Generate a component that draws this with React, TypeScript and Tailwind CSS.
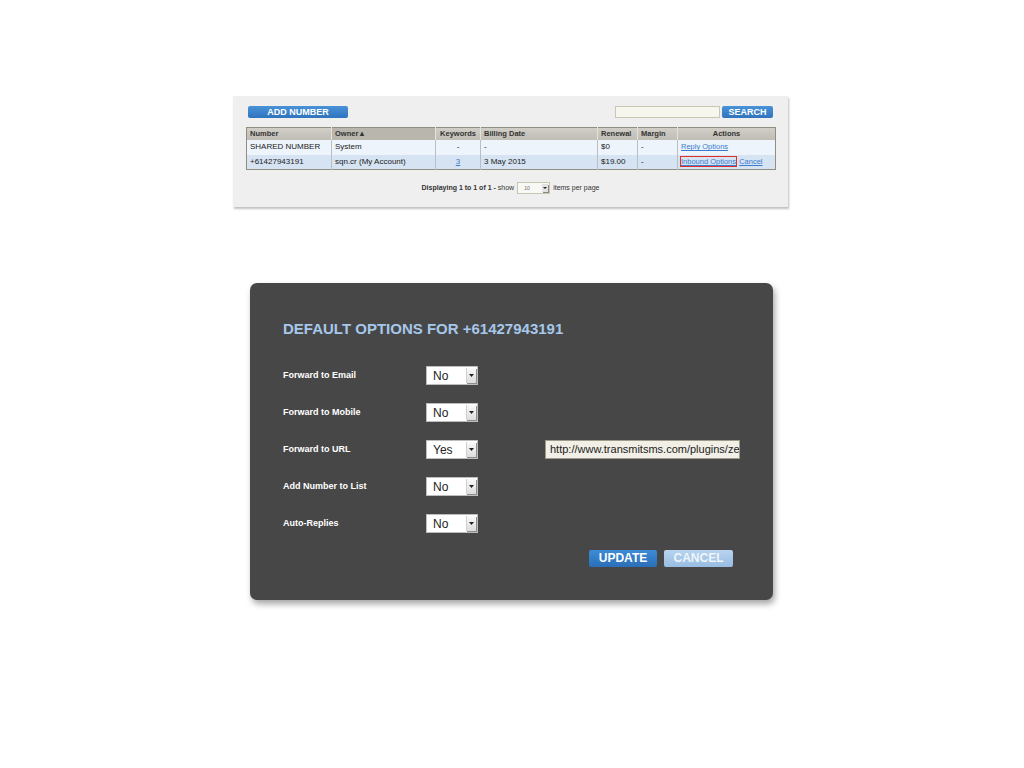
import React from "react"

const font = "font-['Liberation_Sans',Arial,sans-serif]"

function SmallSelect({ value }: { value: string }) {
  return (
    <div className="flex h-[19px] w-[52px] items-stretch border border-[#bdbdbd] bg-white">
      <span className="flex flex-1 items-center pl-[6px] text-[12px] text-[#222]">{value}</span>
      <span className="my-[1px] mr-[1px] flex w-[10px] items-center justify-center border-l border-[#cfcfcf] bg-gradient-to-b from-[#fafafa] to-[#dcdcdc] shadow-[1px_1px_0_#8d8d8d]">
        <svg width="5" height="3" viewBox="0 0 5 3">
          <path d="M0 0h5L2.5 3z" fill="#222" />
        </svg>
      </span>
    </div>
  )
}

const rows = [
  { label: "Forward to Email", value: "No" },
  { label: "Forward to Mobile", value: "No" },
  { label: "Forward to URL", value: "Yes", url: true },
  { label: "Add Number to List", value: "No" },
  { label: "Auto-Replies", value: "No" },
]

export default function App() {
  return (
    <div className={`min-h-[768px] w-[1024px] bg-white ${font}`}>
      <div className="pt-[96px]">
        {/* numbers panel */}
        <div className="ml-[233px] w-[555px] bg-[#efefef] px-[13px] pb-[13px] pt-[10px] shadow-[1px_2px_2px_rgba(0,0,0,0.25)]">
          <div className="flex items-center justify-between px-[2px]">
            <button className="h-[12px] w-[100px] rounded-[2px] bg-gradient-to-b from-[#4a93d8] to-[#2f74bd] text-[9px] font-bold leading-[12px] text-white">
              ADD NUMBER
            </button>
            <div className="flex items-center gap-[2px]">
              <div className="h-[12px] w-[105px] border border-[#c9c6b4] bg-[#f6f5ee]" />
              <button className="h-[12px] w-[51px] rounded-[2px] bg-gradient-to-b from-[#4a93d8] to-[#2f74bd] text-[9px] font-bold leading-[12px] text-white">
                SEARCH
              </button>
            </div>
          </div>

          <table className="mt-[9px] w-[529px] table-fixed border-collapse border border-[#8f8f80] text-[8px] text-[#222]">
            <colgroup>
              <col className="w-[85px]" />
              <col className="w-[104px]" />
              <col className="w-[45px]" />
              <col className="w-[117px]" />
              <col className="w-[40px]" />
              <col className="w-[40px]" />
              <col className="w-[98px]" />
            </colgroup>
            <thead>
              <tr className="h-[12px] bg-gradient-to-b from-[#d0cec6] to-[#bfbdb4] text-[7.5px] font-bold text-[#333]">
                <th className="border-r border-[#e4e2dc] pl-[3px] text-left font-bold">Number</th>
                <th className="border-r border-[#e4e2dc] bg-[#b8b6ad] pl-[3px] text-left font-bold">Owner▲</th>
                <th className="border-r border-[#e4e2dc] text-center font-bold">Keywords</th>
                <th className="border-r border-[#e4e2dc] pl-[3px] text-left font-bold">Billing Date</th>
                <th className="border-r border-[#e4e2dc] pl-[3px] text-left font-bold">Renewal</th>
                <th className="border-r border-[#e4e2dc] pl-[3px] text-left font-bold">Margin</th>
                <th className="text-center font-bold">Actions</th>
              </tr>
            </thead>
            <tbody>
              <tr className="h-[15px] bg-[#eef4fb]">
                <td className="border-r border-[#b7bfc8] pl-[3px]">SHARED NUMBER</td>
                <td className="border-r border-[#b7bfc8] pl-[3px]">System</td>
                <td className="border-r border-[#b7bfc8] text-center">-</td>
                <td className="border-r border-[#b7bfc8] pl-[3px]">-</td>
                <td className="border-r border-[#b7bfc8] pl-[3px]">$0</td>
                <td className="border-r border-[#b7bfc8] pl-[3px]">-</td>
                <td className="pl-[3px] text-[7.5px]">
                  <span className="text-[#3b7bd0] underline">Reply Options</span>
                </td>
              </tr>
              <tr className="h-[15px] bg-[#d5e3f2]">
                <td className="border-r border-[#b7bfc8] pl-[3px]">+61427943191</td>
                <td className="border-r border-[#b7bfc8] pl-[3px]">sqn.cr (My Account)</td>
                <td className="border-r border-[#b7bfc8] text-center">
                  <span className="text-[#3b7bd0] underline">3</span>
                </td>
                <td className="border-r border-[#b7bfc8] pl-[3px]">3 May 2015</td>
                <td className="border-r border-[#b7bfc8] pl-[3px]">$19.00</td>
                <td className="border-r border-[#b7bfc8] pl-[3px]">-</td>
                <td className="pl-[2px] text-[7.5px]">
                  <span className="border-[1.5px] border-[#e0302a] text-[#3b7bd0] underline">Inbound Options</span>{" "}
                  <span className="text-[#3b7bd0] underline">Cancel</span>
                </td>
              </tr>
            </tbody>
          </table>

          <div className="mt-[12px] flex items-center justify-center gap-[3px] text-[7px] text-[#333]">
            <span>
              <b>Displaying 1 to 1 of 1 -</b> show
            </span>
            <div className="flex h-[12px] w-[33px] items-stretch border border-[#c9c6b4] bg-[#f8f8f4]">
              <span className="flex-1 pl-[6px] text-[5px] leading-[10px] text-[#666]">10</span>
              <span className="m-[1px] flex w-[6px] items-center justify-center bg-[#e2e2e2] shadow-[1px_1px_0_#888]">
                <svg width="4" height="2" viewBox="0 0 4 2">
                  <path d="M0 0h4L2 2z" fill="#222" />
                </svg>
              </span>
            </div>
            <span>items per page</span>
          </div>
        </div>

        {/* dialog */}
        <div className="ml-[250px] mt-[76px] h-[317px] w-[523px] rounded-[7px] bg-[#474747] pl-[33px] pt-[37px] shadow-[2px_4px_6px_rgba(0,0,0,0.35)]">
          <h2 className="text-[15px] font-bold leading-[18px] text-[#a6c7ea]">DEFAULT OPTIONS FOR +61427943191</h2>
          <div className="mt-[28px] flex flex-col gap-[18px]">
            {rows.map((r) => (
              <div key={r.label} className="flex h-[19px] items-center">
                <span className="w-[143px] text-[9px] font-bold text-white">{r.label}</span>
                <SmallSelect value={r.value} />
                {r.url && (
                  <div className="ml-[67px] flex h-[19px] w-[195px] items-center overflow-hidden whitespace-nowrap border border-[#9d9b8a] bg-[#f1efe6] pl-[4px] text-[11px] text-[#222]">
                    http://www.transmitsms.com/plugins/zen
                  </div>
                )}
              </div>
            ))}
          </div>
          <div className="ml-[306px] mt-[17px] flex gap-[7px]">
            <button className="h-[17px] w-[68px] rounded-[2px] bg-gradient-to-b from-[#3d8bd6] to-[#2a6fb8] text-[12px] font-bold leading-[17px] text-white">
              UPDATE
            </button>
            <button className="h-[17px] w-[69px] rounded-[2px] bg-gradient-to-b from-[#b8d4ee] to-[#98bce2] text-[12px] font-bold leading-[17px] text-[#eef5fc]">
              CANCEL
            </button>
          </div>
        </div>
      </div>
    </div>
  )
}
